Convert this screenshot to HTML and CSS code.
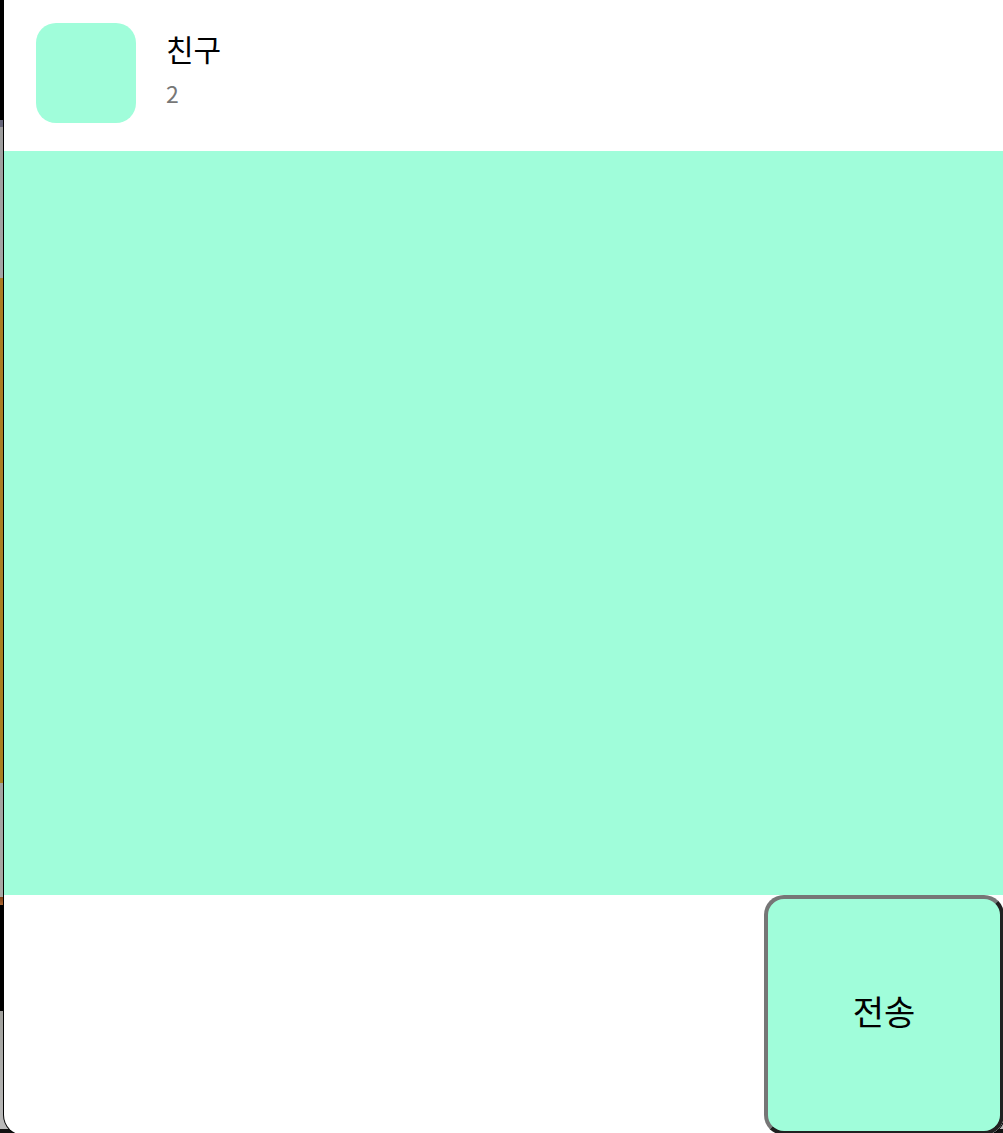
FILE: index.html
```html
<!DOCTYPE html>
<html lang="ko">
<head>
<meta charset="utf-8">
<meta name="viewport" content="width=device-width, initial-scale=1">
<title>친구</title>
<link rel="stylesheet" href="styles.css">
</head>
<body>
<main class="window">
  <header class="header">
    <div class="avatar"></div>
    <div class="info">
      <h1 class="name">친구</h1>
      <p class="count">2</p>
    </div>
  </header>
  <section class="messages"></section>
  <form class="composer">
    <textarea class="message" aria-label="메시지"></textarea>
    <button class="send" type="button">전송</button>
  </form>
</main>
</body>
</html>
```
FILE: styles.css
```css
* {
  box-sizing: border-box;
}

body {
  margin: 0;
  height: 100vh;
  overflow: hidden;
  padding-left: 4px;
  font-family: "Noto Sans CJK KR", sans-serif;
  /* desktop behind the window */
  background: linear-gradient(
    #000 120px,
    #66667a 120px, #66667a 127px,
    #9d9d9d 127px, #a5a5a5 278px,
    #ab7d22 278px, #a9801f 783px,
    #a3a3a0 783px, #a8a8a4 897px,
    #7b4015 897px, #ad6a35 905px,
    #000 905px, #000 1011px,
    #a0a09c 1011px, #bababa 1129px,
    #111 1129px
  );
}

.window {
  display: flex;
  flex-direction: column;
  /* the window's lower edge lies just below the visible area */
  height: calc(100vh + 2px);
  margin-right: -1px;
  overflow: hidden;
  border-radius: 0 0 20px 20px;
  background: #fff;
  box-shadow: 0 0 0 1px #000;
}

.header {
  display: flex;
  gap: 30px;
  padding: 23px 32px 28px;
}

.avatar {
  width: 100px;
  height: 100px;
  border-radius: 20px;
  background: #a0fdda;
}

.info {
  padding-top: 3px;
}

.name,
.count {
  margin: 0;
}

.name {
  font-size: 30px;
  font-weight: 400;
  line-height: 44px;
}

.count {
  color: #777;
  font-size: 23px;
  line-height: 46px;
}

.messages {
  flex: 1;
  background: #a0fdda;
}

.composer {
  display: flex;
  height: 240px;
}

.message {
  flex: 1;
  min-width: 0;
  padding: 16px;
  border: 0;
  outline: 0;
  resize: none;
  background: transparent;
  font: inherit;
  font-size: 30px;
}

.send {
  width: 240px;
  padding: 0 0 10px;
  border: 4px solid;
  border-color: #767676 #212121 #212121 #767676;
  border-radius: 20px;
  background: #a0fdda;
  color: #000;
  font-family: inherit;
  font-size: 34px;
  font-weight: 400;
}
```
